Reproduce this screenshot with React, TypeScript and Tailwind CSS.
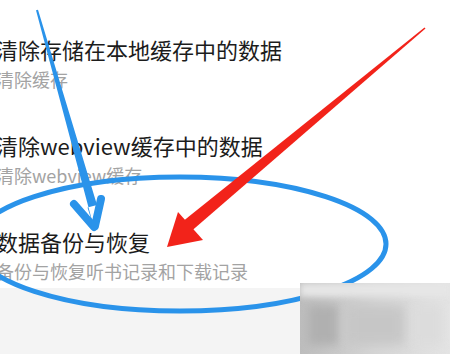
import { ChevronRight } from "lucide-react";

type Row = {
    title: string;
    sub: string;
};

const rows: Row[] = [
    { title: "清除存储在本地缓存中的数据", sub: "清除缓存" },
    { title: "清除webview缓存中的数据", sub: "清除webview缓存" },
    { title: "数据备份与恢复", sub: "备份与恢复听书记录和下载记录" },
];

function Annotations() {
    return (
        <svg
            className="absolute inset-0 pointer-events-none"
            width={450}
            height={354}
            viewBox="0 0 450 354"
        >
            {/* circle round the last row */}
            <ellipse
                cx={180}
                cy={244}
                rx={206}
                ry={67}
                fill="none"
                stroke="#2a93ea"
                strokeWidth={5}
            />
            {/* blue arrow */}
            <polygon
                points="36,10.3 38,9.7 97,205 87.5,207.5 94,228"
                fill="#2a93ea"
            />
            <line
                x1={74}
                y1={204}
                x2={94}
                y2={227}
                stroke="#2a93ea"
                strokeWidth={8}
                strokeLinecap="round"
            />
            <line
                x1={101}
                y1={199}
                x2={95}
                y2={226}
                stroke="#2a93ea"
                strokeWidth={8}
                strokeLinecap="round"
            />
            {/* red arrow */}
            <polygon
                points="425.5,28.6 424.5,27.4 180.8,223 189.2,233"
                fill="#f2231a"
            />
            <polygon points="167,247 178,212 203,240" fill="#f2231a" />
        </svg>
    );
}

export default function App() {
    return (
        <div
            className="relative w-[450px] h-[354px] overflow-hidden bg-white flex flex-col"
            style={{ fontFamily: '"Noto Sans CJK SC", "Noto Sans", sans-serif' }}
        >
            {rows.map((row) => (
                <div key={row.title} className="h-[96px] pt-[30px] flex items-center">
                    <div className="flex-1 -ml-[4px]">
                        <div className="text-[22px] leading-[26px] text-[#1c1c1c] whitespace-nowrap">
                            {row.title}
                        </div>
                        <div className="mt-[6px] text-[18px] leading-[22px] text-[#a3a3a3] whitespace-nowrap">
                            {row.sub}
                        </div>
                    </div>
                    <ChevronRight className="size-[22px] -mr-[15px] text-[#c4c4c4] shrink-0" strokeWidth={1.5} />
                </div>
            ))}
            <div className="flex-1 bg-[#f4f4f4]" />
            <Annotations />
            {/* blurred watermark bottom right */}
            <div className="absolute left-[300px] top-[283px] w-[150px] h-[71px] bg-gradient-to-r from-[#bdbdbd] via-[#d6d6d6] to-[#e4e4e4] overflow-hidden">
                <div className="h-[14px] bg-[#e6e6e6] blur-[3px]" />
                <div className="flex gap-2 px-2 pt-2">
                    <div className="w-[30px] h-[40px] bg-[#b0b0b0] blur-[5px]" />
                    <div className="w-[60px] h-[40px] bg-[#c6c6c6] blur-[6px]" />
                    <div className="w-[30px] h-[40px] bg-[#dcdcdc] blur-[5px]" />
                </div>
            </div>
        </div>
    );
}
